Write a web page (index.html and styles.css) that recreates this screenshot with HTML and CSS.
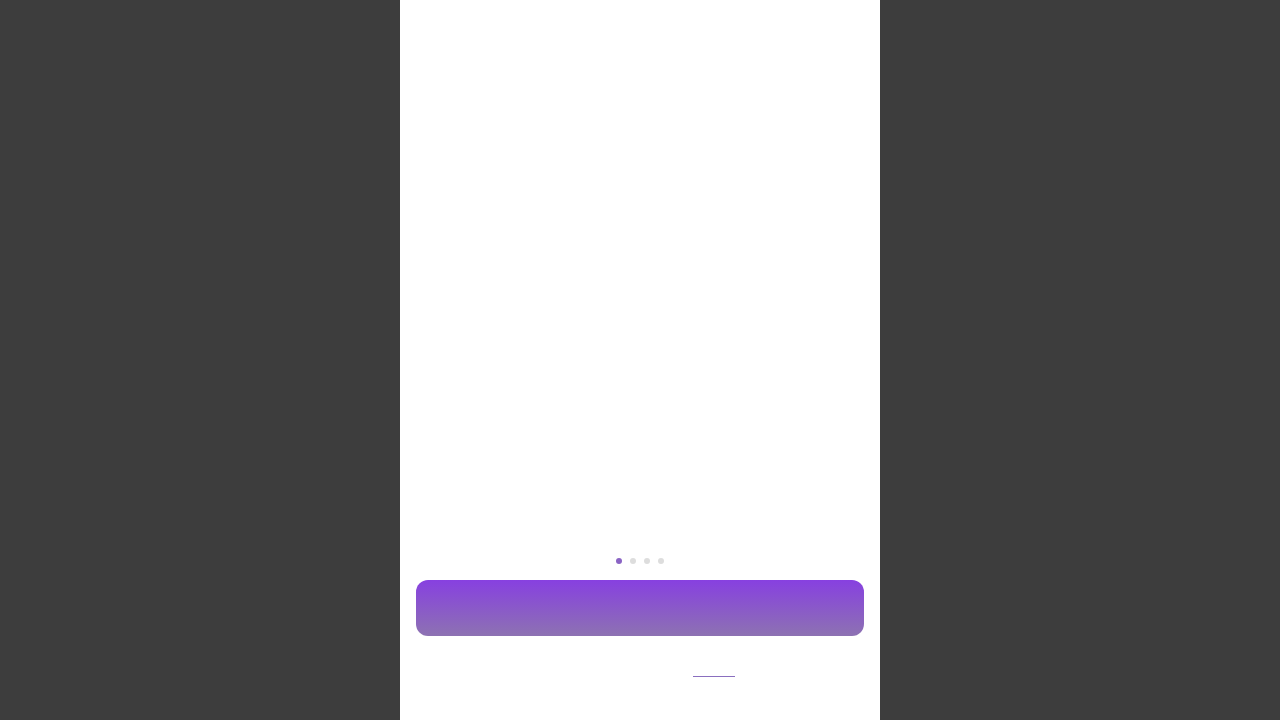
FILE: index.html
```html
<!DOCTYPE html>
<html lang="en">
<head>
<meta charset="utf-8">
<title>Onboarding</title>
<link rel="stylesheet" href="styles.css">
</head>
<body>
<div class="app">
  <main class="hero"></main>
  <div class="dots">
    <span class="dot active"></span>
    <span class="dot"></span>
    <span class="dot"></span>
    <span class="dot"></span>
  </div>
  <button class="cta" type="button"></button>
  <footer class="footer">
    <a class="link" href="#"></a>
  </footer>
</div>
</body>
</html>
```
FILE: styles.css
```css
html, body {
  margin: 0;
  padding: 0;
  height: 100%;
}
body {
  background: #3d3d3d;
  font-family: "Inter", "Liberation Sans", sans-serif;
}
.app {
  width: 480px;
  height: 720px;
  margin: 0 auto;
  background: #ffffff;
  display: flex;
  flex-direction: column;
}
.hero {
  flex: 1;
}
.dots {
  display: flex;
  justify-content: center;
  gap: 8px;
  height: 6px;
  margin-bottom: 16px;
}
.dot {
  width: 6px;
  height: 6px;
  border-radius: 50%;
  background: #dddddd;
}
.dot.active {
  background: #8a63c4;
}
.cta {
  display: block;
  margin: 0 16px;
  height: 56px;
  border: none;
  padding: 0;
  border-radius: 12px;
  background: linear-gradient(180deg, #8740e0 0%, #8d72b2 100%);
}
.footer {
  height: 84px;
  box-sizing: border-box;
  padding-top: 40px;
  padding-left: 293px;
  display: flex;
  align-items: flex-start;
}
.link {
  display: block;
  width: 42px;
  height: 0;
  border-bottom: 1px solid #8a6fbf;
}
```
